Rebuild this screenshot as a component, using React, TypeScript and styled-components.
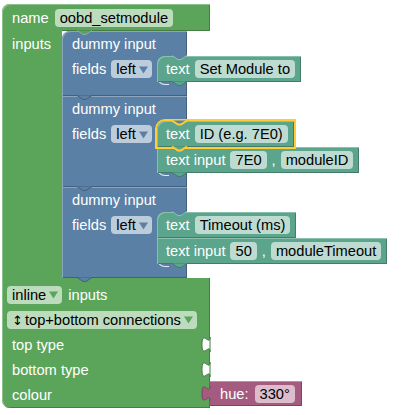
import React from 'react'
import styled, { createGlobalStyle } from 'styled-components'

const colours = {
  green: { base: '#5ba55b', light: '#8cc08c', dark: '#447c44' },
  blue: { base: '#5b80a5', light: '#8ca6c0', dark: '#44607c' },
  teal: { base: '#5ba58c', light: '#8cc0ae', dark: '#447c69' },
  pink: { base: '#a55b80', light: '#c08ca6', dark: '#7c4460' },
}
type Hue = keyof typeof colours

const SELECTED = '#fc3'

const GlobalStyle = createGlobalStyle`
  body {
    margin: 0;
    background: #fff;
    font-family: 'Liberation Sans', Arial, sans-serif;
  }
`

const Page = styled.div`
  padding: 4px 0 0 2px;
`

const Factory = styled.div`
  display: flex;
  flex-direction: column;
  align-items: flex-start;
`

const Label = styled.span`
  color: #fff;
  font-size: 11pt;
  line-height: 18px;
  white-space: nowrap;
`

const Field = styled.span`
  display: inline-flex;
  align-items: center;
  gap: 3px;
  height: 18px;
  padding: 0 5px;
  border-radius: 4px;
  background: rgba(255, 255, 255, 0.6);
  color: #000;
  font-size: 11pt;
  white-space: nowrap;
`

const DropField = styled(Field)`
  padding-right: 4px;
`

const ArrowSvg = styled.svg`
  display: block;
  margin-top: 1px;
`

const TopBar = styled.div`
  position: relative;
  width: 208px;
  height: 27px;
  box-sizing: border-box;
  display: flex;
  align-items: center;
  gap: 6px;
  padding-left: 10px;
  background: ${colours.green.base};
  border-top-left-radius: 8px;
  box-shadow: inset 1px 1px 0 ${colours.green.light}, inset -1px 0 0 ${colours.green.dark};

  &::after {
    content: '';
    position: absolute;
    left: 60px;
    right: 0;
    bottom: 0;
    height: 1px;
    background: ${colours.green.dark};
  }
`

const Middle = styled.div`
  display: flex;
`

const Column = styled.div`
  width: 60px;
  box-sizing: border-box;
  padding-left: 10px;
  background: ${colours.green.base};
  box-shadow: inset 1px 0 0 ${colours.green.light};
`

const LabelRow = styled.div`
  height: 25px;
  display: flex;
  align-items: center;
`

const Stack = styled.div`
  display: flex;
  flex-direction: column;
  align-items: flex-start;
`

const DummyBlock = styled.div<{ $first?: boolean }>`
  position: relative;
  width: 125px;
  display: flex;
  flex-direction: column;
  background: ${colours.blue.base};
  border-top-left-radius: ${({ $first }) => ($first ? '8px' : '0')};
  box-shadow: inset 1px 1px 0 ${colours.blue.light}, inset -1px -1px 0 ${colours.blue.dark};
`

const HeaderRow = styled.div`
  height: 25px;
  display: flex;
  align-items: center;
  padding-left: 10px;
`

const StatementRow = styled.div`
  display: flex;
`

const Arm = styled.div`
  flex-shrink: 0;
  width: 95px;
  height: 26px;
  box-sizing: border-box;
  padding-left: 10px;
  display: flex;
  align-items: center;
  gap: 5px;
`

const Slot = styled.div`
  position: relative;
  flex-shrink: 0;
  display: flex;
  flex-direction: column;
  align-items: flex-start;

  &::after {
    content: '';
    position: absolute;
    left: 0;
    bottom: -3px;
    width: 12px;
    height: 12px;
    border-left: 1px solid rgba(255, 255, 255, 0.85);
    border-bottom: 1px solid rgba(255, 255, 255, 0.85);
    border-bottom-left-radius: 8px;
    box-sizing: border-box;
  }
`

const Footer = styled.div`
  height: 14px;
`

const TextBlock = styled.div<{ $first?: boolean; $selected?: boolean }>`
  position: relative;
  z-index: ${({ $selected }) => ($selected ? 2 : 1)};
  height: 26px;
  box-sizing: border-box;
  display: flex;
  align-items: center;
  gap: 5px;
  padding: 0 6px 0 9px;
  background: ${colours.teal.base};
  border-top-left-radius: ${({ $first }) => ($first ? '8px' : '0')};
  box-shadow: inset 1px 1px 0 ${colours.teal.light}, inset -1px -1px 0 ${colours.teal.dark}
    ${({ $selected }) => ($selected ? `, 0 0 0 2px ${SELECTED}` : '')};
`

const BottomRow = styled.div`
  display: flex;
  align-items: flex-end;
`

const Bottom = styled.div`
  width: 208px;
  box-sizing: border-box;
  padding: 4px 0 1px;
  background: ${colours.green.base};
  border-bottom-left-radius: 8px;
  box-shadow: inset 1px 0 0 ${colours.green.light}, inset -1px -1px 0 ${colours.green.dark};
`

const InputRow = styled.div<{ $field?: boolean }>`
  position: relative;
  height: 25px;
  display: flex;
  align-items: center;
  gap: 6px;
  padding-left: ${({ $field }) => ($field ? '5px' : '10px')};
`

const Glyph = styled.span`
  font-family: 'DejaVu Sans', 'Liberation Sans', sans-serif;
  font-size: 13px;
  margin-right: 2px;
`

const PuzzleSvg = styled.svg<{ $side: 'left' | 'right' }>`
  position: absolute;
  top: 5px;
  ${({ $side }) => ($side === 'right' ? 'right: 0;' : 'left: -9px;')}
  z-index: 3;
  overflow: visible;
`

const ValueBlock = styled.div`
  position: relative;
  height: 25px;
  margin-bottom: 2px;
  box-sizing: border-box;
  display: flex;
  align-items: center;
  gap: 6px;
  padding: 0 7px 0 10px;
  background: ${colours.pink.base};
  box-shadow: inset 0 1px 0 ${colours.pink.light}, inset -1px -1px 0 ${colours.pink.dark};
`

const NotchSvg = styled.svg<{ $at: 'top' | 'bottom' }>`
  position: absolute;
  left: 14px;
  ${({ $at }) => ($at === 'bottom' ? 'top: calc(100% - 1px);' : 'top: -1px;')}
  z-index: 4;
  overflow: visible;
`

const Notch = ({ at, fill, stroke, width = 1 }: { at: 'top' | 'bottom'; fill: string; stroke: string; width?: number }) => (
  <NotchSvg $at={at} width="17" height="6" viewBox="0 0 17 6">
    <path d="M1,0.5 l6,4 h3 l6,-4" fill={fill} stroke={stroke} strokeWidth={width} />
  </NotchSvg>
)

const Arrow = ({ hue }: { hue: Hue }) => (
  <ArrowSvg width="9" height="8" viewBox="0 0 9 8">
    <path d="M0,0.5 H9 L4.5,7.5 Z" fill={colours[hue].base} />
  </ArrowSvg>
)

const Dropdown = ({ hue, children }: { hue: Hue; children: React.ReactNode }) => (
  <DropField>
    {children}
    <Arrow hue={hue} />
  </DropField>
)

const Cutout = () => (
  <PuzzleSvg $side="right" width="9" height="15" viewBox="0 0 9 15">
    <path d="M9,0 C9,10 1,-8 1,7.5 C1,23 9,5 9,15 Z" fill="#fff" stroke={colours.green.dark} strokeWidth={1} />
  </PuzzleSvg>
)

type Piece =
  | { kind: 'text'; value: string; selected?: boolean }
  | { kind: 'input'; value: string; name: string }

const TextPiece = ({ piece, first, last, parentFill }: { piece: Piece; first: boolean; last: boolean; parentFill: string }) => {
  const selected = piece.kind === 'text' && !!piece.selected
  const edge = selected ? SELECTED : colours.teal.dark
  return (
    <TextBlock $first={first} $selected={selected}>
      {first && <Notch at="top" fill={parentFill} stroke={selected ? SELECTED : colours.teal.light} width={selected ? 2 : 1} />}
      {piece.kind === 'text' ? (
        <>
          <Label>text</Label>
          <Field>{piece.value}</Field>
        </>
      ) : (
        <>
          <Label>text input</Label>
          <Field>{piece.value}</Field>
          <Label>,</Label>
          <Field>{piece.name}</Field>
        </>
      )}
      {(last || selected) && <Notch at="bottom" fill={colours.teal.base} stroke={edge} width={selected ? 2 : 1} />}
    </TextBlock>
  )
}

const inputs: Piece[][] = [
  [{ kind: 'text', value: 'Set Module to' }],
  [
    { kind: 'text', value: 'ID (e.g. 7E0)', selected: true },
    { kind: 'input', value: '7E0', name: 'moduleID' },
  ],
  [
    { kind: 'text', value: 'Timeout (ms)' },
    { kind: 'input', value: '50', name: 'moduleTimeout' },
  ],
]

export default function App() {
  return (
    <>
      <GlobalStyle />
      <Page>
        <Factory>
          <TopBar>
            <Label>name</Label>
            <Field>oobd_setmodule</Field>
          </TopBar>
          <Middle>
            <Column>
              <LabelRow>
                <Label>inputs</Label>
              </LabelRow>
            </Column>
            <Stack>
              {inputs.map((pieces, i) => (
                <DummyBlock key={i} $first={i === 0}>
                  {i === 0 && <Notch at="top" fill={colours.green.base} stroke={colours.blue.light} />}
                  <HeaderRow>
                    <Label>dummy input</Label>
                  </HeaderRow>
                  <StatementRow>
                    <Arm>
                      <Label>fields</Label>
                      <Dropdown hue="blue">left</Dropdown>
                    </Arm>
                    <Slot>
                      {pieces.map((p, j) => (
                        <TextPiece
                          key={j}
                          piece={p}
                          first={j === 0}
                          last={j === pieces.length - 1}
                          parentFill={colours.blue.base}
                        />
                      ))}
                    </Slot>
                  </StatementRow>
                  <Footer />
                  <Notch at="bottom" fill={colours.blue.base} stroke={colours.blue.dark} />
                </DummyBlock>
              ))}
            </Stack>
          </Middle>
          <BottomRow>
            <Bottom>
              <InputRow $field>
                <Dropdown hue="green">inline</Dropdown>
                <Label>inputs</Label>
              </InputRow>
              <InputRow $field>
                <Dropdown hue="green">
                  <span>
                    <Glyph>↕</Glyph>top+bottom connections
                  </span>
                </Dropdown>
              </InputRow>
              <InputRow>
                <Label>top type</Label>
                <Cutout />
              </InputRow>
              <InputRow>
                <Label>bottom type</Label>
                <Cutout />
              </InputRow>
              <InputRow>
                <Label>colour</Label>
              </InputRow>
            </Bottom>
            <ValueBlock>
              <PuzzleSvg $side="left" width="9" height="15" viewBox="0 0 9 15">
                <path
                  d="M9,0 C9,10 1,-8 1,7.5 C1,23 9,5 9,15"
                  fill={colours.pink.base}
                  stroke={colours.pink.dark}
                  strokeWidth={1}
                />
              </PuzzleSvg>
              <Label>hue:</Label>
              <Field>330°</Field>
            </ValueBlock>
          </BottomRow>
        </Factory>
      </Page>
    </>
  )
}
